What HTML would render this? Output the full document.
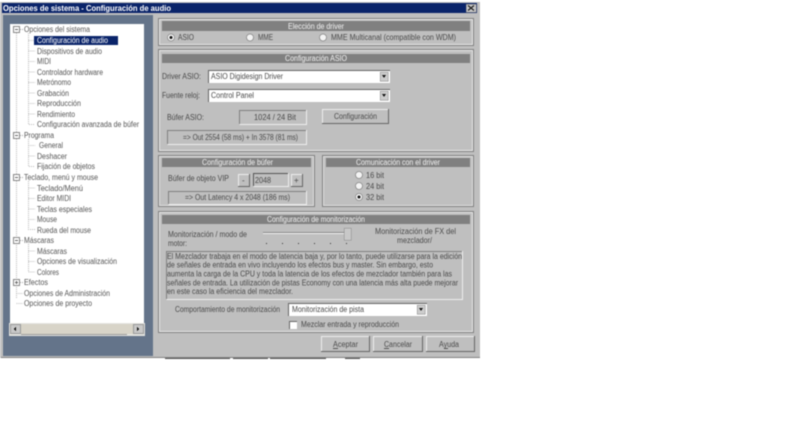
<!DOCTYPE html>
<html><head><meta charset="utf-8"><style>
html,body{margin:0;padding:0;background:#fff;width:800px;height:428px;overflow:hidden}
svg{display:block;filter:blur(.5px)}
text{font-family:"Liberation Sans",sans-serif;font-size:8px;fill:#4a4a4a}
.h{fill:#f2f2f2;text-anchor:start}
.t{fill:#555}
</style></head><body>
<svg width="800" height="428" viewBox="0 0 800 428" xmlns="http://www.w3.org/2000/svg" shape-rendering="crispEdges">
<rect width="800" height="428" fill="#fff"/>
<!-- window -->
<rect x="0" y="2" width="480" height="356" fill="#bfbfbf"/>
<rect x="1" y="357" width="479" height="1" fill="#808080"/>
<path d="M165 358.5H230M233 358.5H268M270 358.5H326M345 358.5H360" stroke="#555"/>
<rect x="2" y="3" width="475" height="10" fill="#0a246a"/>
<text x="3" y="11" style="font-weight:bold;fill:#fff;font-size:8.5px" textLength="168" lengthAdjust="spacingAndGlyphs">Opciones de sistema - Configuración de audio</text>
<rect x="466" y="4" width="10" height="8" fill="#c8c8c8" stroke="#777" stroke-width=".5"/>
<path d="M468 5.5L474 10.5M474 5.5L468 10.5" stroke="#222" stroke-width="1.2" shape-rendering="auto"/>
<!-- left panel -->
<rect x="3" y="15" width="150" height="341" fill="#64748a"/>
<rect x="10" y="24" width="134" height="300" fill="#fff"/>
<rect x="34" y="36" width="84" height="9" fill="#0a246a"/>
<g stroke="#bbb" stroke-width="1" stroke-dasharray="1 1" fill="none">
<path d="M16.5 33V299M16.5 303.5H23M28.5 33V124.5H35M28.5 40.5H34M28.5 51H35M28.5 61.5H35M28.5 72H35M28.5 82.5H35M28.5 93H35M28.5 103.5H35M28.5 114H35M28.5 139V166.5H35M28.5 145.5H35M28.5 156H35M28.5 181V229.5H35M28.5 188H35M28.5 198.5H35M28.5 209H35M28.5 219.5H35M28.5 244V272H35M28.5 251H35M28.5 261.5H35M16.5 293.5H23"/>
</g>
<g fill="#fff" stroke="#888" stroke-width="1">
<rect x="13.5" y="26.5" width="6" height="6"/><rect x="13.5" y="132.5" width="6" height="6"/><rect x="13.5" y="174.5" width="6" height="6"/><rect x="13.5" y="237.5" width="6" height="6"/><rect x="13.5" y="279.5" width="6" height="6"/>
</g>
<path d="M15 29.5H18M15 135.5H18M15 177.5H18M15 240.5H18M15 282.5H18M16.5 281V284" stroke="#666" fill="none"/>
<path d="M20 29.5H23M20 135.5H23M20 177.5H23M20 240.5H23M20 282.5H23" stroke="#aaa" stroke-dasharray="1 1"/>
<g class="t">
<text class="t" x="24" y="32" textLength="66" lengthAdjust="spacingAndGlyphs">Opciones del sistema</text>
<text x="37" y="43" style="fill:#fff" textLength="71" lengthAdjust="spacingAndGlyphs">Configuración de audio</text>
<text class="t" x="37" y="54" textLength="65" lengthAdjust="spacingAndGlyphs">Dispositivos de audio</text>
<text class="t" x="37" y="64" textLength="14" lengthAdjust="spacingAndGlyphs">MIDI</text>
<text class="t" x="37" y="75" textLength="66" lengthAdjust="spacingAndGlyphs">Controlador hardware</text>
<text class="t" x="37" y="85" textLength="34" lengthAdjust="spacingAndGlyphs">Metrónomo</text>
<text class="t" x="37" y="96" textLength="32" lengthAdjust="spacingAndGlyphs">Grabación</text>
<text class="t" x="37" y="106" textLength="44" lengthAdjust="spacingAndGlyphs">Reproducción</text>
<text class="t" x="37" y="117" textLength="38" lengthAdjust="spacingAndGlyphs">Rendimiento</text>
<text class="t" x="37" y="127" textLength="102" lengthAdjust="spacingAndGlyphs">Configuración avanzada de búfer</text>
<text class="t" x="24" y="138" textLength="30" lengthAdjust="spacingAndGlyphs">Programa</text>
<text class="t" x="39" y="148" textLength="24" lengthAdjust="spacingAndGlyphs">General</text>
<text class="t" x="37" y="159" textLength="30" lengthAdjust="spacingAndGlyphs">Deshacer</text>
<text class="t" x="37" y="169" textLength="58" lengthAdjust="spacingAndGlyphs">Fijación de objetos</text>
<text class="t" x="24" y="180" textLength="74" lengthAdjust="spacingAndGlyphs">Teclado, menú y mouse</text>
<text class="t" x="37" y="191" textLength="46" lengthAdjust="spacingAndGlyphs">Teclado/Menú</text>
<text class="t" x="37" y="201" textLength="34" lengthAdjust="spacingAndGlyphs">Editor MIDI</text>
<text class="t" x="37" y="212" textLength="55" lengthAdjust="spacingAndGlyphs">Teclas especiales</text>
<text class="t" x="37" y="222" textLength="20" lengthAdjust="spacingAndGlyphs">Mouse</text>
<text class="t" x="37" y="233" textLength="54" lengthAdjust="spacingAndGlyphs">Rueda del mouse</text>
<text class="t" x="24" y="243" textLength="30" lengthAdjust="spacingAndGlyphs">Máscaras</text>
<text class="t" x="37" y="254" textLength="30" lengthAdjust="spacingAndGlyphs">Máscaras</text>
<text class="t" x="37" y="264" textLength="80" lengthAdjust="spacingAndGlyphs">Opciones de visualización</text>
<text class="t" x="37" y="275" textLength="22" lengthAdjust="spacingAndGlyphs">Colores</text>
<text class="t" x="24" y="285" textLength="24" lengthAdjust="spacingAndGlyphs">Efectos</text>
<text class="t" x="24" y="296" textLength="86" lengthAdjust="spacingAndGlyphs">Opciones de Administración</text>
<text class="t" x="24" y="306" textLength="68" lengthAdjust="spacingAndGlyphs">Opciones de proyecto</text>
</g>
<!-- scrollbar -->
<rect x="9" y="323" width="136" height="13" fill="#e4e4e0"/>
<rect x="21" y="324" width="106" height="10" fill="#d8d4c8"/>
<path d="M127.5 324V334" stroke="#777"/>
<path d="M21 334.5H127" stroke="#999"/>
<rect x="127" y="324" width="6" height="10" fill="#d8d4c8"/>
<rect x="10.5" y="324.5" width="10" height="9" fill="#c8c8c8" stroke="#999"/>
<rect x="133.5" y="324.5" width="10" height="9" fill="#c8c8c8" stroke="#999"/>
<path d="M16 327V331L13.5 329ZM137 327V331L139.5 329Z" fill="#111"/>
<!-- groups -->
<g fill="none">
<rect x="158.5" y="18.5" width="315" height="27" stroke="#808080"/><rect x="159.5" y="19.5" width="313" height="25" stroke="#e8e8e8"/>
<rect x="158.5" y="49.5" width="315" height="102" stroke="#808080"/><rect x="159.5" y="50.5" width="313" height="100" stroke="#e8e8e8"/>
<rect x="158.5" y="155.5" width="156" height="51" stroke="#808080"/><rect x="159.5" y="156.5" width="154" height="49" stroke="#e0e0e0"/>
<rect x="322.5" y="155.5" width="151" height="51" stroke="#808080"/><rect x="323.5" y="156.5" width="149" height="49" stroke="#e0e0e0"/>
<rect x="158.5" y="211.5" width="315" height="121" stroke="#808080"/><rect x="159.5" y="212.5" width="313" height="119" stroke="#e8e8e8"/>
</g>
<g fill="#808080">
<rect x="162" y="21" width="308" height="10"/>
<rect x="162" y="54" width="308" height="9"/>
<rect x="162" y="158" width="149" height="9"/>
<rect x="326" y="158" width="144" height="9"/>
<rect x="162" y="215" width="308" height="9"/>
</g>
<text class="h" x="288" y="29" textLength="56" lengthAdjust="spacingAndGlyphs">Elección de driver</text>
<text class="h" x="285" y="61" textLength="62" lengthAdjust="spacingAndGlyphs">Configuración ASIO</text>
<text class="h" x="202" y="165" textLength="71" lengthAdjust="spacingAndGlyphs">Configuración de búfer</text>
<text class="h" x="356" y="165" textLength="84" lengthAdjust="spacingAndGlyphs">Comunicación con el driver</text>
<text class="h" x="267" y="222" textLength="98" lengthAdjust="spacingAndGlyphs">Configuración de monitorización</text>
<!-- radios -->
<g shape-rendering="auto" fill="#f4f4f4" stroke="#888" stroke-width=".8">
<circle cx="171" cy="37.5" r="3.5"/><circle cx="250" cy="37.5" r="3.5"/><circle cx="323" cy="37.5" r="3.5"/>
<circle cx="359" cy="175" r="3.5"/><circle cx="359" cy="186" r="3.5"/><circle cx="359" cy="197" r="3.5"/>
</g>
<circle cx="171" cy="37.5" r="1.5" fill="#111" shape-rendering="auto"/><circle cx="359" cy="197" r="1.5" fill="#111" shape-rendering="auto"/>
<text x="178" y="40" textLength="16" lengthAdjust="spacingAndGlyphs">ASIO</text>
<text x="258" y="40" textLength="15" lengthAdjust="spacingAndGlyphs">MME</text>
<text x="331" y="40" textLength="125" lengthAdjust="spacingAndGlyphs">MME Multicanal (compatible con WDM)</text>
<text x="366" y="178" textLength="18" lengthAdjust="spacingAndGlyphs">16 bit</text>
<text x="366" y="189" textLength="18" lengthAdjust="spacingAndGlyphs">24 bit</text>
<text x="366" y="200" textLength="18" lengthAdjust="spacingAndGlyphs">32 bit</text>
<!-- selects -->
<g>
<rect x="208" y="70" width="182" height="13" fill="#fff"/><path d="M208.5 83V70.5H390" stroke="#666" fill="none"/>
<rect x="380" y="72" width="8" height="9" fill="#ccc" stroke="#888" stroke-width=".5"/><path d="M382 75H386L384 78Z" fill="#111"/>
<rect x="208" y="89" width="182" height="13" fill="#fff"/><path d="M208.5 102V89.5H390" stroke="#666" fill="none"/>
<rect x="380" y="91" width="8" height="9" fill="#ccc" stroke="#888" stroke-width=".5"/><path d="M382 94H386L384 97Z" fill="#111"/>
<rect x="288" y="303" width="139" height="13" fill="#fff"/><path d="M288.5 316V303.5H427" stroke="#666" fill="none"/>
<rect x="417" y="305" width="8" height="9" fill="#ccc" stroke="#888" stroke-width=".5"/><path d="M419 308H423L421 311Z" fill="#111"/>
</g>
<text x="162" y="79" textLength="39" lengthAdjust="spacingAndGlyphs">Driver ASIO:</text>
<text x="211" y="79" textLength="72" lengthAdjust="spacingAndGlyphs">ASIO Digidesign Driver</text>
<text x="162" y="98" textLength="38" lengthAdjust="spacingAndGlyphs">Fuente reloj:</text>
<text x="211" y="98" textLength="43" lengthAdjust="spacingAndGlyphs">Control Panel</text>
<text x="167" y="120" textLength="37" lengthAdjust="spacingAndGlyphs">Búfer ASIO:</text>
<!-- sunken boxes -->
<g fill="none">
<path d="M239.5 124V110.5H306" stroke="#808080"/><path d="M239.5 124.5H306.5V110" stroke="#eee"/>
<path d="M167.5 144V130.5H306" stroke="#808080"/><path d="M167.5 144.5H306.5V130" stroke="#eee"/>
<path d="M168.5 204V191.5H306" stroke="#808080"/><path d="M168.5 204.5H306.5V191" stroke="#eee"/>
<path d="M166.5 299V251.5H462" stroke="#808080"/><path d="M166.5 299.5H462.5V251" stroke="#eee"/>
<path d="M253.5 186V173.5H288" stroke="#555"/><path d="M253.5 186.5H288.5V173" stroke="#eee"/>
</g>
<text x="254" y="120" textLength="42" lengthAdjust="spacingAndGlyphs">1024 / 24 Bit</text>
<text x="183" y="140" textLength="115" lengthAdjust="spacingAndGlyphs">=&gt; Out 2554 (58 ms) + In 3578 (81 ms)</text>
<text x="168" y="181" textLength="61" lengthAdjust="spacingAndGlyphs">Búfer de objeto VIP</text>
<text x="255" y="183" textLength="16" lengthAdjust="spacingAndGlyphs">2048</text>
<text x="185" y="200" textLength="105" lengthAdjust="spacingAndGlyphs">=&gt; Out Latency 4 x 2048 (186 ms)</text>
<!-- buttons -->
<g fill="none" stroke="#eee">
<path d="M322.5 123V109.5H388"/><path d="M238.5 186V174.5H249"/><path d="M291.5 186V174.5H302"/>
<path d="M321.5 351V336.5H369"/><path d="M373.5 351V336.5H422"/><path d="M426.5 351V336.5H474"/>
</g>
<g fill="none" stroke="#666">
<path d="M322 123.5H388.5V109"/><path d="M238 186.5H249.5V174"/><path d="M291 186.5H302.5V174"/>
<path d="M321 351.5H369.5V336"/><path d="M373 351.5H422.5V336"/><path d="M426 351.5H474.5V336"/>
</g>
<text x="334" y="119" textLength="43" lengthAdjust="spacingAndGlyphs">Configuración</text>
<text x="242" y="183">-</text>
<text x="294" y="183">+</text>
<text x="333" y="347" textLength="25" lengthAdjust="spacingAndGlyphs">Aceptar</text>
<text x="384" y="347" textLength="28" lengthAdjust="spacingAndGlyphs">Cancelar</text>
<text x="439" y="347" textLength="20" lengthAdjust="spacingAndGlyphs">Ayuda</text>
<path d="M333 348.5H338M384 348.5H389M444 348.5H448" stroke="#555"/>
<!-- monitor -->
<text x="168" y="237" textLength="79" lengthAdjust="spacingAndGlyphs">Monitorización / modo de</text>
<text x="168" y="246" textLength="19" lengthAdjust="spacingAndGlyphs">motor:</text>
<text x="375" y="234" textLength="81" lengthAdjust="spacingAndGlyphs">Monitorización de FX del</text>
<text x="397" y="243" textLength="35" lengthAdjust="spacingAndGlyphs">mezclador/</text>
<rect x="263" y="232" width="87" height="1" fill="#888"/><rect x="263" y="233" width="87" height="1" fill="#f4f4f4"/>
<rect x="344" y="228" width="7" height="12" fill="#c8c8c8" stroke="#888" stroke-width=".5"/>
<path d="M266.5 243v1M282.5 243v1M298.5 243v1M314.5 243v1M330.5 243v1M346.5 243v1" stroke="#333"/>
<g style="font-size:8px">
<text x="167" y="259" textLength="295" lengthAdjust="spacingAndGlyphs">El Mezclador trabaja en el modo de latencia baja y, por lo tanto, puede utilizarse para la edición</text>
<text x="167" y="267.5" textLength="266" lengthAdjust="spacingAndGlyphs">de señales de entrada en vivo incluyendo los efectos bus y master. Sin embargo, esto</text>
<text x="167" y="276.5" textLength="285" lengthAdjust="spacingAndGlyphs">aumenta la carga de la CPU y toda la latencia de los efectos de mezclador también para las</text>
<text x="167" y="285.5" textLength="291" lengthAdjust="spacingAndGlyphs">señales de entrada. La utilización de pistas Economy con una latencia más alta puede mejorar</text>
<text x="167" y="294" textLength="126" lengthAdjust="spacingAndGlyphs">en este caso la eficiencia del mezclador.</text>
</g>
<text x="175" y="312" textLength="105" lengthAdjust="spacingAndGlyphs">Comportamiento de monitorización</text>
<text x="292" y="312" textLength="72" lengthAdjust="spacingAndGlyphs">Monitorización de pista</text>
<rect x="289" y="321" width="8" height="8" fill="#fff"/><path d="M289.5 329V321.5H297" stroke="#666" fill="none"/>
<text x="301" y="327" textLength="98" lengthAdjust="spacingAndGlyphs">Mezclar entrada y reproducción</text>
</svg>
</body></html>
